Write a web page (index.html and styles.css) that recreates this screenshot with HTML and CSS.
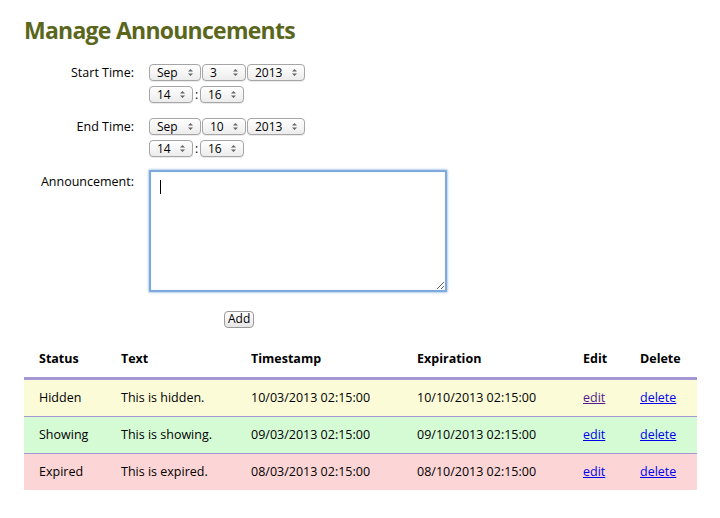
FILE: index.html
```html
<!DOCTYPE html>
<html>
<head>
<meta charset="utf-8">
<link rel="stylesheet" href="styles.css">
</head>
<body>
<h1 class="title">Manage Announcements</h1>
<form class="form">
  <label class="lbl">Start Time:</label>
  <div class="ctrl">
    <div class="line">
      <select class="sel w-mon"><option>Sep</option></select>
      <select class="sel w-day"><option>3</option></select>
      <select class="sel w-yr"><option>2013</option></select>
    </div>
    <div class="line">
      <select class="sel w-hm"><option>14</option></select><span class="colon">:</span><select class="sel w-hm"><option>16</option></select>
    </div>
  </div>
  <label class="lbl">End Time:</label>
  <div class="ctrl">
    <div class="line">
      <select class="sel w-mon"><option>Sep</option></select>
      <select class="sel w-day"><option>10</option></select>
      <select class="sel w-yr"><option>2013</option></select>
    </div>
    <div class="line">
      <select class="sel w-hm"><option>14</option></select><span class="colon">:</span><select class="sel w-hm"><option>16</option></select>
    </div>
  </div>
  <label class="lbl lbl-area">Announcement:</label>
  <div class="ctrl area-wrap">
    <textarea class="area"></textarea>
    <span class="caret"></span>
  </div>
  <span></span>
  <div class="btn-row"><button type="button" class="btn">Add</button></div>
</form>
<table class="tbl">
  <colgroup>
    <col class="c1"><col class="c2"><col class="c3"><col class="c4"><col class="c5"><col class="c6">
  </colgroup>
  <thead>
    <tr><th>Status</th><th>Text</th><th>Timestamp</th><th>Expiration</th><th>Edit</th><th>Delete</th></tr>
  </thead>
  <tbody>
    <tr class="hidden"><td>Hidden</td><td>This is hidden.</td><td>10/03/2013 02:15:00</td><td>10/10/2013 02:15:00</td><td><a class="visited" href="#">edit</a></td><td><a href="#">delete</a></td></tr>
    <tr class="showing"><td>Showing</td><td>This is showing.</td><td>09/03/2013 02:15:00</td><td>09/10/2013 02:15:00</td><td><a href="#">edit</a></td><td><a href="#">delete</a></td></tr>
    <tr class="expired"><td>Expired</td><td>This is expired.</td><td>08/03/2013 02:15:00</td><td>08/10/2013 02:15:00</td><td><a href="#">edit</a></td><td><a href="#">delete</a></td></tr>
  </tbody>
</table>
</body>
</html>
```
FILE: styles.css
```css
html, body { margin: 0; padding: 0; background: #fff; }
body {
  padding: 0 23px 0 24px;
  font-family: "Open Sans", "DejaVu Sans", sans-serif;
  font-size: 12.5px;
  color: #000;
}
.title {
  margin: 14px 0 0 0;
  font-size: 23px;
  line-height: 32px;
  font-weight: bold;
  color: #5a661c;
  letter-spacing: -0.75px;
}
.form {
  display: grid;
  grid-template-columns: 110px 1fr;
  column-gap: 15px;
  row-gap: 15px;
  margin-top: 18px;
}
.lbl {
  text-align: right;
  line-height: 17px;
}
.lbl-area { padding-top: 1px; }
.ctrl { display: flex; flex-direction: column; gap: 5px; }
.line { display: flex; align-items: center; gap: 1px; }
.sel {
  -webkit-appearance: none;
  appearance: none;
  height: 17px;
  margin: 0;
  padding: 0 0 0 7px;
  font-family: inherit;
  font-size: 12px;
  line-height: 15px;
  color: #000;
  border: 1px solid #a6a6a6;
  border-radius: 4px;
  background-color: #f4f4f4;
  background-image: url("data:image/svg+xml;utf8,<svg xmlns='http://www.w3.org/2000/svg' width='7' height='9'><path d='M1 3.5 L3.5 1 L6 3.5Z M1 5.5 L3.5 8 L6 5.5Z' fill='%23666'/></svg>"), linear-gradient(#ffffff, #ececec);
  background-repeat: no-repeat, no-repeat;
  background-position: right 6px center, 0 0;
  box-shadow: 0 1px 0 rgba(0,0,0,0.08);
}
.w-mon { width: 52px; }
.w-day { width: 44px; }
.w-yr { width: 58px; }
.w-hm { width: 44px; }
.colon { width: 5px; text-align: center; font-size: 12px; line-height: 17px; }
.area-wrap { position: relative; margin-top: -2px; }
.area {
  box-sizing: border-box;
  width: 298px;
  height: 122px;
  margin: 0;
  border: 2px solid #7ea9dc;
  border-radius: 1px;
  box-shadow: 0 0 2px 1px #b6d0ef, inset 0 0 1px #a8c6ea;
  outline: none;
  resize: both;
  font-family: inherit;
}
.caret {
  position: absolute;
  left: 11px;
  top: 10px;
  width: 1px;
  height: 14px;
  background: #000;
}
.btn-row { padding-left: 75px; margin-top: 3px; }
.btn {
  height: 17px;
  padding: 0 3px;
  font-family: inherit;
  font-size: 12px;
  line-height: 14px;
  color: #000;
  border: 1px solid #9a9a9a;
  border-radius: 4px;
  background: linear-gradient(#ffffff, #e6e6e6);
}
.tbl {
  margin-top: 13px;
  width: 673px;
  border-collapse: collapse;
  table-layout: fixed;
}
.c1 { width: 82px; }
.c2 { width: 130px; }
.c3 { width: 166px; }
.c4 { width: 166px; }
.c5 { width: 57px; }
.c6 { width: 72px; }
.tbl th, .tbl td {
  text-align: left;
  padding: 0 0 0 15px;
  height: 36px;
  white-space: nowrap;
  vertical-align: middle;
}
.tbl th { font-weight: bold; border-bottom: 3px solid #a596d6; }
.tbl tbody tr + tr td { border-top: 1px solid #a596d6; }
.tbl .hidden { background: #fbfbd8; }
.tbl .showing { background: #d5fbd5; }
.tbl .expired { background: #fcd6d6; }
.tbl a { color: #0000ee; }
.tbl a.visited { color: #551a8b; }
```
